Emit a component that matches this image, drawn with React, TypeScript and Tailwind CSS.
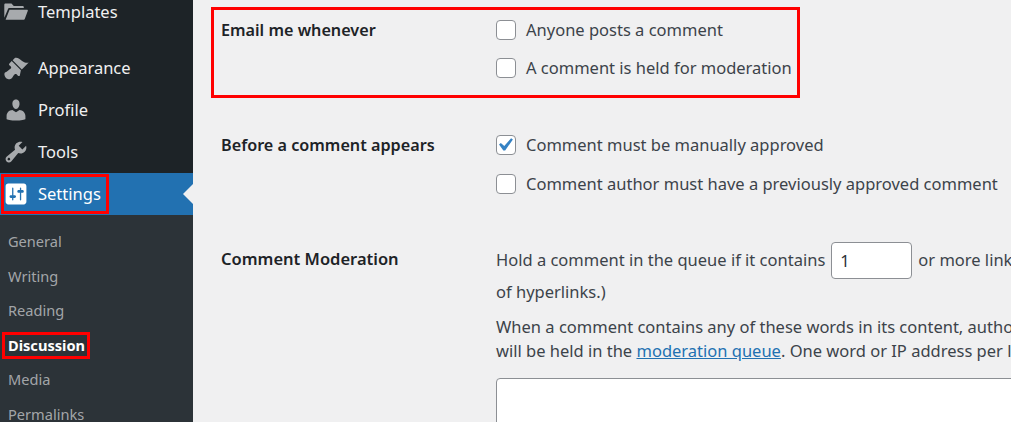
import React from "react";

const SANS = "font-['Noto_Sans',sans-serif]";

const icons: Record<string, string> = {
  templates:
    "M1 4.5c0-.6.4-1 1-1h4.5l1.8 1.8H15c.6 0 1 .4 1 1V7H5.2c-.7 0-1.3.4-1.5 1L1 14.5zM5 8.2h13.4c.5 0 .8.4.7.9l-2.3 6.1c-.1.5-.6.8-1.1.8H2z",
  appearance:
    "M14.48 11.06L7.41 3.99l1.5-1.5c.5-.56 2.3-.47 3.51.32 1.21.8 1.43 1.28 2.91 2.1 1.18.64 2.45 1.26 4.45.85zm-.71.71L6.7 4.7 4.93 6.47c-.39.39-.39 1.02 0 1.41l1.06 1.06c.39.39.39 1.03 0 1.42-.6.6-1.43 1.11-2.21 1.69-.35.26-.7.53-1.01.84C1.43 13.23.91 14.1 1.1 15.1c.08.45.21.86.34 1.2.13.34.29.62.45.86.17.24.36.45.57.64.21.18.45.34.74.47.28.13.62.25 1.04.33 1.02.19 1.89-.34 2.23-.58.32-.28.6-.64.85-.99.57-.78 1.09-1.6 1.69-2.2.39-.39 1.03-.39 1.42 0l1.06 1.06c.39.39 1.02.39 1.41 0z",
  profile:
    "M10 9.25c-2.27 0-2.73-3.44-2.73-3.44C7 4.02 7.82 2 9.97 2c2.16 0 2.98 2.02 2.71 3.81 0 0-.41 3.44-2.68 3.44zm0 2.57L12.72 10c2.39 0 4.52 2.33 4.52 4.53v2.49s-3.65 1.13-7.24 1.13c-3.65 0-7.24-1.13-7.24-1.13v-2.49c0-2.25 1.94-4.48 4.47-4.48z",
  tools:
    "M16.68 9.77c-1.34 1.34-3.3 1.67-4.95.99l-5.41 6.52c-.99.99-2.59.99-3.58 0s-.99-2.59 0-3.57l6.52-5.42c-.68-1.65-.35-3.61.99-4.95 1.28-1.28 3.12-1.62 4.72-1.06l-2.89 2.89 2.82 2.82 2.86-2.87c.53 1.58.18 3.39-1.08 4.65zM3.81 16.21c.4.39 1.04.39 1.43 0 .4-.4.4-1.04 0-1.43-.39-.4-1.03-.4-1.43 0-.39.39-.39 1.03 0 1.43z",
  settings:
    "M18 16V4c0-1.1-.9-2-2-2H4c-1.1 0-2 .9-2 2v12c0 1.1.9 2 2 2h12c1.1 0 2-.9 2-2zM8 11h1c.55 0 1 .45 1 1s-.45 1-1 1H8v1.5c0 .28-.22.5-.5.5s-.5-.22-.5-.5V13H6c-.55 0-1-.45-1-1s.45-1 1-1h1V5.5c0-.28.22-.5.5-.5s.5.22.5.5V11zm5-2h-1c-.55 0-1-.45-1-1s.45-1 1-1h1V5.5c0-.28.22-.5.5-.5s.5.22.5.5V7h1c.55 0 1 .45 1 1s-.45 1-1 1h-1v5.5c0 .28-.22.5-.5.5s-.5-.22-.5-.5V9z",
};

const MenuItem = ({ name, label, active }: { name: string; label: string; active?: boolean }) => (
  <div
    className={`relative flex h-[42px] items-center pl-[3px] text-[16.5px] ${
      active ? "bg-[#2271b1] text-white" : "text-[#f0f0f1]"
    }`}
  >
    <svg viewBox="0 0 20 20" className="w-[26px] h-[26px] shrink-0" fill={active ? "#ffffff" : "#a7aaad"}>
      <path d={icons[name]} />
    </svg>
    <span className="ml-[9px]">{label}</span>
    {active && (
      <>
        <span className="absolute left-px top-px w-[108px] h-10 border-[3px] border-[#ff0000]" />
        <span className="absolute right-0 top-[11px] border-y-[10px] border-r-[10px] border-y-transparent border-r-[#f0f0f1]" />
      </>
    )}
  </div>
);

const SubItem = ({ label, active }: { label: string; active?: boolean }) => (
  <div
    className={`relative flex h-[34.5px] items-center pl-2 text-[14.6px] ${
      active ? "font-bold text-white" : "text-[#c3c4c7]/80"
    }`}
  >
    {label}
    {active && <span className="absolute left-[2px] top-[3px] w-[88px] h-[27px] border-[3px] border-[#ff0000]" />}
  </div>
);

const Check = ({ label, checked }: { label: string; checked?: boolean }) => (
  <label className="flex items-center gap-[10px] h-[20px] whitespace-nowrap">
    <span className="relative flex w-5 h-5">
      <input
        type="checkbox"
        defaultChecked={checked}
        className="w-5 h-5 appearance-none rounded-[4px] border border-[#8c8f94] bg-white"
      />
      {checked && (
        <svg viewBox="3.5 2.5 15 15" className="absolute left-0 top-0 w-5 h-5" fill="#3582c4">
          <path d="M14.83 4.89l1.34.94-5.81 8.38H9.02L5.78 9.67l1.34-1.25 2.57 2.4z" />
        </svg>
      )}
    </span>
    {label}
  </label>
);

export default function App() {
  return (
    <div className={`flex h-[422px] w-[1011px] overflow-hidden bg-[#f0f0f1] ${SANS}`}>
      <aside className="w-[193px] shrink-0 bg-[#1d2327]">
        <div className="-mt-[9px] mb-[14px]">
          <MenuItem name="templates" label="Templates" />
        </div>
        <MenuItem name="appearance" label="Appearance" />
        <MenuItem name="profile" label="Profile" />
        <MenuItem name="tools" label="Tools" />
        <MenuItem name="settings" label="Settings" active />
        <div className="bg-[#2c3338] pt-[10px] pb-[20px]">
          <SubItem label="General" />
          <SubItem label="Writing" />
          <SubItem label="Reading" />
          <SubItem label="Discussion" active />
          <SubItem label="Media" />
          <SubItem label="Permalinks" />
        </div>
      </aside>

      <main className="relative flex-1 min-w-0 pl-[28px] text-[16.5px] text-[#3c434a]">
        <span className="absolute left-[18px] top-[7px] w-[589px] h-[91px] border-[3px] border-[#ff0000]" />

        <section className="grid grid-cols-[275px_1fr] pt-[20px]">
          <h2 className="text-[16.2px] leading-5 font-semibold text-[#1d2327]">Email me whenever</h2>
          <div className="flex flex-col gap-[18px]">
            <Check label="Anyone posts a comment" />
            <Check label="A comment is held for moderation" />
          </div>
        </section>

        <section className="grid grid-cols-[275px_1fr] pt-[57px]">
          <h2 className="text-[16.2px] leading-5 font-semibold text-[#1d2327]">Before a comment appears</h2>
          <div className="flex flex-col gap-[19px]">
            <Check label="Comment must be manually approved" checked />
            <Check label="Comment author must have a previously approved comment" />
          </div>
        </section>

        <section className="grid grid-cols-[275px_1fr] pt-[48px]">
          <h2 className="pt-[7px] text-[16.5px] leading-5 font-semibold text-[#1d2327]">Comment Moderation</h2>
          <div className="min-w-0 whitespace-nowrap">
            <div className="flex items-center h-[37px] gap-[6px]">
              <span>Hold a comment in the queue if it contains</span>
              <input
                readOnly
                value="1"
                className="w-[81px] h-[37px] shrink-0 rounded-[4px] border border-[#8c8f94] bg-white px-2 text-[16.5px] text-[#2c3338] outline-none"
              />
              <span>or more links. (A common characteristic of comment spam is a large number</span>
            </div>
            <p className="mt-[1px] leading-6">of hyperlinks.)</p>
            <p className="mt-[11px] leading-6">
              When a comment contains any of these words in its content, author name, URL, email, IP address, or browser
            </p>
            <p className="leading-6">
              will be held in the <a className="text-[#2271b1] underline">moderation queue</a>. One word or IP address per line. It will match inside words
            </p>
            <textarea
              readOnly
              className="mt-[15px] block w-[700px] h-[120px] rounded-[4px] border border-[#8c8f94] bg-white"
            />
          </div>
        </section>
      </main>
    </div>
  );
}
